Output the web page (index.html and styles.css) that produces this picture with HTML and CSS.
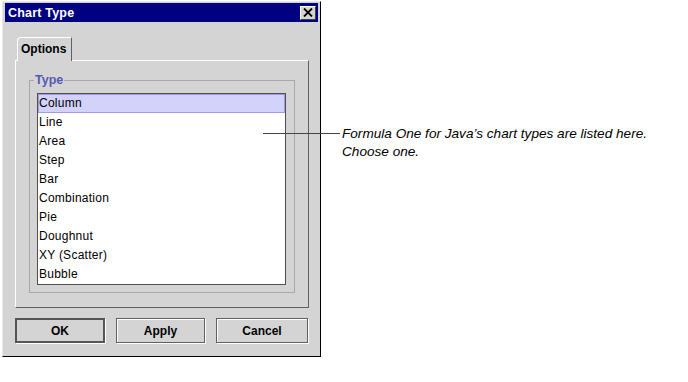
FILE: index.html
```html
<!DOCTYPE html>
<html>
<head>
<meta charset="utf-8">
<link rel="stylesheet" href="styles.css">
</head>
<body>
<div class="page">
  <div class="window">
    <div class="titlebar">
      <span class="title">Chart Type</span>
      <span class="close">
        <svg width="10" height="9" viewBox="0 0 10 9"><path d="M1 0.5 L9 8.5 M9 0.5 L1 8.5" stroke="#000" stroke-width="1.8" fill="none"/></svg>
      </span>
    </div>
    <div class="content">
      <div class="tabs"><div class="tab">Options</div></div>
      <div class="panel">
        <fieldset class="group">
          <legend class="legend">Type</legend>
          <ul class="list">
            <li class="item selected">Column</li>
            <li class="item">Line</li>
            <li class="item">Area</li>
            <li class="item">Step</li>
            <li class="item">Bar</li>
            <li class="item">Combination</li>
            <li class="item">Pie</li>
            <li class="item">Doughnut</li>
            <li class="item">XY (Scatter)</li>
            <li class="item">Bubble</li>
          </ul>
        </fieldset>
      </div>
      <div class="buttons">
        <button class="btn btn-default btn-ok">OK</button>
        <button class="btn btn-apply">Apply</button>
        <button class="btn btn-cancel">Cancel</button>
      </div>
    </div>
  </div>
  <div class="callout">
    <div class="callout-line"></div>
    <div class="callout-text">Formula One for Java’s chart types are listed here.<br>Choose one.</div>
  </div>
</div>
</body>
</html>
```

FILE: styles.css
```css
html, body {
  margin: 0;
  padding: 0;
  background: #ffffff;
}
.page {
  position: relative;
  width: 688px;
  height: 382px;
  padding: 1px 0 0 2px;
  box-sizing: border-box;
  font-family: "Liberation Sans", Arial, sans-serif;
}
.window {
  width: 319px;
  height: 356px;
  box-sizing: border-box;
  background: #d4d4d4;
  border-top: 1px solid #e8e8e8;
  border-left: 1px solid #e8e8e8;
  border-right: 1px solid #000;
  border-bottom: 1px solid #000;
  padding: 1px 2px 0 2px;
  display: flex;
  flex-direction: column;
}
.titlebar {
  height: 19px;
  background: #000080;
  color: #fff;
  display: flex;
  align-items: center;
  justify-content: space-between;
  padding: 0 2px 0 3px;
}
.title {
  font-weight: bold;
  font-size: 12.5px;
  letter-spacing: 0.2px;
}
.close {
  width: 16px;
  height: 14px;
  box-sizing: border-box;
  background: #d4d4d4;
  border-top: 1px solid #fff;
  border-left: 1px solid #fff;
  border-right: 1px solid #404040;
  border-bottom: 1px solid #404040;
  display: flex;
  align-items: center;
  justify-content: center;
}
.content {
  padding: 15px 9px 0 10px;
  display: flex;
  flex-direction: column;
}
.tabs {
  display: flex;
  padding-left: 2px;
  position: relative;
  z-index: 1;
  margin-bottom: -1px;
}
.tab {
  width: 55px;
  height: 24px;
  box-sizing: border-box;
  background: #d4d4d4;
  border-top: 1px solid #fff;
  border-left: 1px solid #fff;
  border-right: 1px solid #606060;
  border-top-left-radius: 4px;
  font-weight: bold;
  font-size: 12px;
  padding: 4px 0 0 3px;
}
.panel {
  height: 248px;
  box-sizing: border-box;
  border-top: 1px solid #fff;
  border-left: 1px solid #fff;
  border-right: 1px solid #606060;
  border-bottom: 1px solid #606060;
  padding: 12px 14px 0 13px;
}
.group {
  margin: 0;
  min-width: 0;
  width: 266px;
  box-sizing: border-box;
  border: 1px solid #a8a8a8;
  padding: 6px 8px 7px 7px;
}
.legend {
  margin-left: -3px;
  padding: 0 1px;
  font-weight: bold;
  font-size: 12.5px;
  line-height: 14px;
  color: #5858b8;
}
.list {
  list-style: none;
  margin: 0;
  padding: 0;
  width: 249px;
  box-sizing: border-box;
  background: #fff;
  border: 1px solid #505050;
}
.item {
  height: 19px;
  line-height: 19px;
  padding-left: 1px;
  font-size: 12px;
  letter-spacing: 0.25px;
  color: #000;
  box-sizing: border-box;
}
.selected {
  background: #d2d2fa;
  border: 1px solid #9c9cea;
  line-height: 17px;
  padding-left: 0;
}
.buttons {
  display: flex;
  margin-top: 10px;
  gap: 10px;
}
.btn {
  height: 25px;
  box-sizing: border-box;
  font-family: "Liberation Sans", Arial, sans-serif;
  font-weight: bold;
  font-size: 12px;
  color: #000;
  background: #d4d4d4;
  border: 1px solid #606060;
  box-shadow: inset 1px 1px 0 #fff, 1px 1px 0 #fff;
  padding: 0;
  margin: 0;
}
.btn-default {
  border: 2px solid #555;
  box-shadow: 1px 1px 0 #fff;
}
.btn-ok { width: 90px; }
.btn-apply { width: 89px; margin-left: 1px; }
.btn-cancel { width: 92px; margin-left: 1px; }
.callout {
  position: absolute;
  left: 263px;
  top: 125px;
  display: flex;
  align-items: flex-start;
}
.callout-line {
  width: 77px;
  height: 1px;
  margin-top: 8px;
  background: #444;
}
.callout-text {
  margin-left: 2px;
  font-style: italic;
  font-size: 13.6px;
  line-height: 18px;
  color: #000;
  white-space: nowrap;
}
```
